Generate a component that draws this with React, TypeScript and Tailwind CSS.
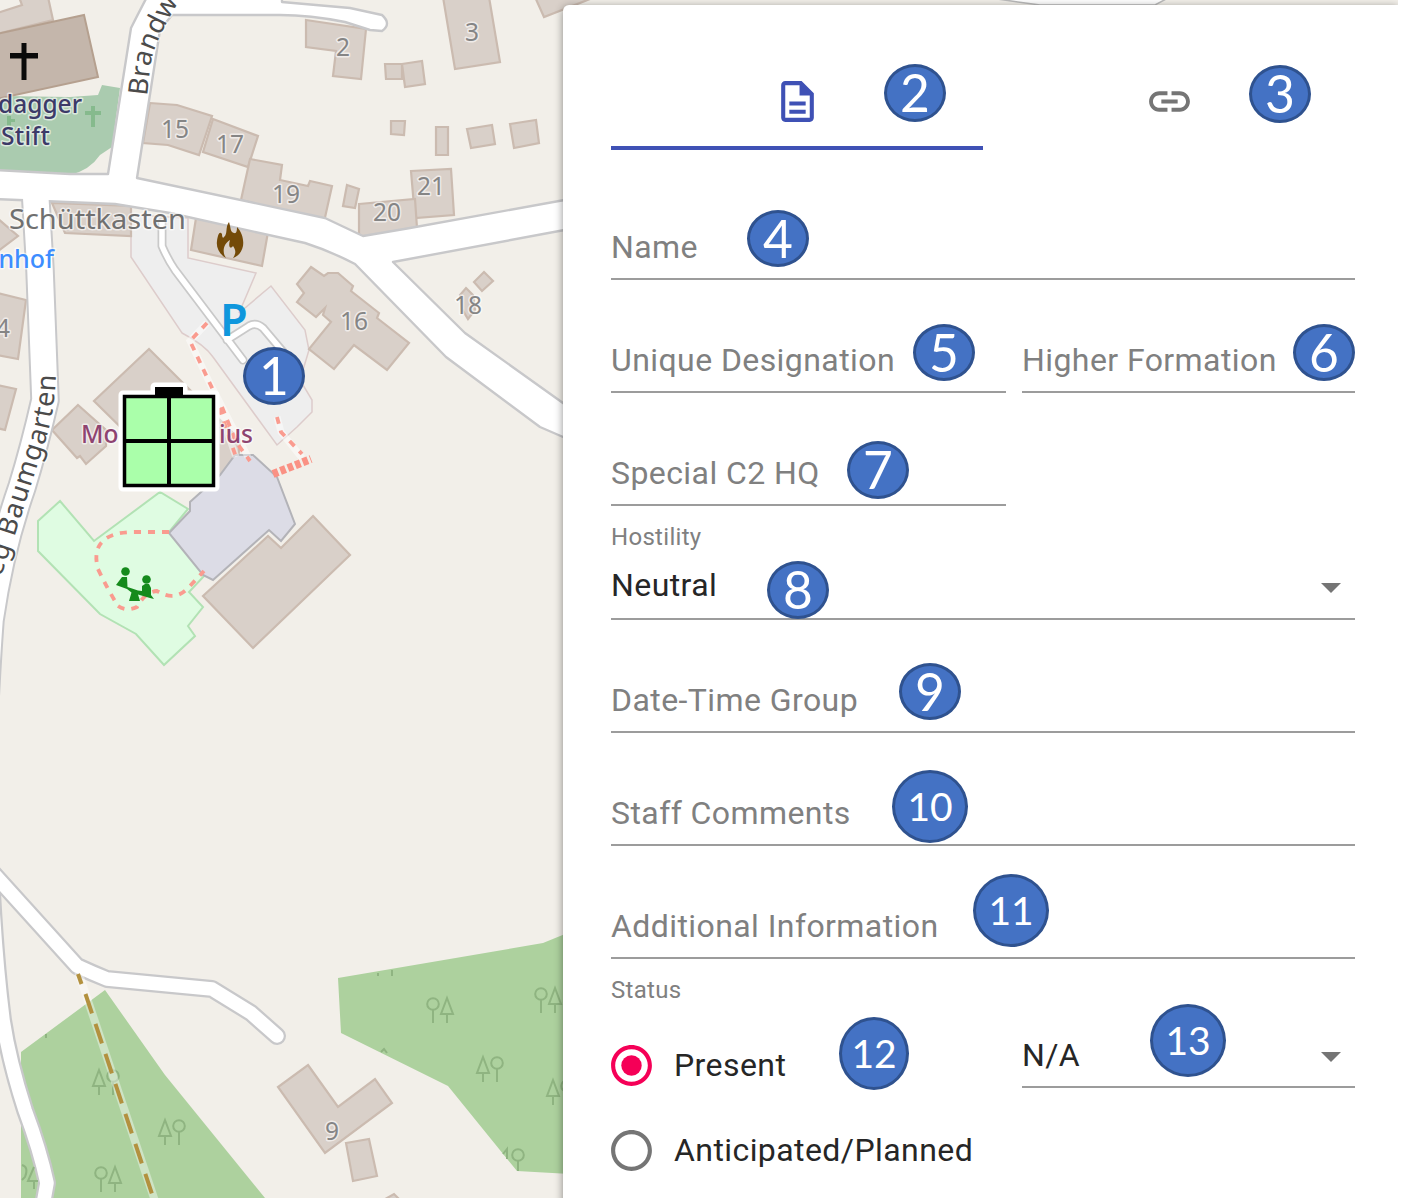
import React from "react";

const BUILDINGS = [
  "-3,13 22,5 19,-3 48,-3 53,20 -3,34",
  "150,103 177,105 212,116 199,155 168,145 143,143",
  "213,119 258,136 248,167 203,152",
  "250,159 282,165 280,180 308,186 310,181 332,186 324,222 241,200",
  "306,20 366,29 361,79 333,76 336,51 306,47",
  "443,-3 489,-3 500,62 455,69",
  "385,64 402,64 402,79 386,79",
  "402,64 422,61 425,84 405,87",
  "391,121 405,121 404,135 391,134",
  "436,127 448,127 448,155 436,155",
  "467,129 492,125 495,144 471,148",
  "510,124 536,120 539,143 514,148",
  "411,171 451,169 454,215 415,218",
  "359,204 415,199 417,228 359,238",
  "347,185 359,189 355,208 343,206",
  "535,-3 544,17 590,-1 590,-3",
  "311,267 324,276 328,273 338,273 353,286 351,291 379,313 377,318 409,343 387,370 354,345 334,369 309,349 331,322 323,315 325,308 316,317 297,302 304,293 297,284",
  "484,272 493,281 482,291 474,282",
  "466,288 473,295 475,310 468,319 462,309 460,295",
  "196,218 268,232 262,266 191,250",
  "52,203 131,206 131,236 65,233",
  "-3,218 18,236 -3,252",
  "-3,293 26,300 18,359 -3,355",
  "-3,385 16,389 5,430 -3,428",
  "149,349 94,401 150,456 215,480 238,460 240,440",
  "78,405 106,430 106,446 86,464 80,456 77,458 52,430",
  "313,516 350,555 253,648 203,596 268,536 281,548",
  "308,1065 338,1107 375,1079 392,1103 325,1153 278,1087",
  "346,1143 369,1139 377,1176 353,1181",
  "380,1202 394,1194 402,1202",
];

const NUMBERS: [string, number, number][] = [
  ["2", 343, 56],
  ["3", 472, 41],
  ["15", 175, 138],
  ["17", 230, 153],
  ["19", 286, 203],
  ["20", 387, 221],
  ["21", 431, 195],
  ["16", 354, 330],
  ["18", 468, 314],
  ["4", 3, 337],
  ["9", 332, 1140],
];

const SOUTH_ROAD = "M35,185 L40,270 L45,400 Q34,448 22,487 Q0,550 -10,620 Q-13,660 -16,720";
const WEST_ROAD = "M-10,850 Q-6,950 3,1020 Q9,1060 25,1110 Q40,1150 47,1183 L43,1205";
const TRACK = "M-8,872 L77,966 Q92,973 107,979 L212,989 L251,1013 L277,1036";
const SERVICE = "M162,222 L162,246 Q168,260 175,270 L243,360 M227,340 L249,326 Q256,322 263,328 L290,360";
const MAIN_ROAD =
  "M-5,170 L70,174 L108,174 L131,28 Q138,14 148,-5 L282,-5 L282,2 L350,8 L382,15 Q392,24 382,31 L370,30 L345,22 Q310,15 280,15 L185,15 L172,15 L160,30 L137,178 L325,218 L363,236 L410,228 L570,199 L570,229 L393,262 L465,333 L570,408 L570,440 L540,427 L446,357 L355,264 Q330,251 305,243 L170,213 L115,204 L-5,199 Z";

function Trees({ x, y, flip = false }: { x: number; y: number; flip?: boolean }) {
  return (
    <g transform={`translate(${x} ${y}) scale(${flip ? -1 : 1} 1)`} fill="none" stroke="#8fb481" strokeWidth="2">
      <circle cx="-7" cy="-6" r="5.8" />
      <path d="M-7,0 V13 M7,-12 L1,4 H13 Z M7,4 V13" />
    </g>
  );
}

function MapCanvas() {
  return (
    <svg className="absolute inset-0" width="1398" height="1198" viewBox="0 0 1398 1198" fontFamily="'Noto Sans', sans-serif">
      <rect width="1398" height="1198" fill="#f2efe9" />
      <path d="M-5,96 L70,97 L98,95 L102,85 L120,88 L112,147 L100,155 Q90,170 70,175 L-5,172Z" fill="#aacbaf" />
      <path d="M105,990 L21,1052 V1198 H265 L165,1075Z" fill="#add19e" />
      <path d="M338,978 L543,943 L570,932 V1174 L517,1171 L448,1086 L341,1033Z" fill="#add19e" />
      <path
        d="M131,215 V257 L182,333 Q205,345 213,357 L277,445 L297,427 L312,412 V400 L300,380 L309,350 L305,330 L271,286 L239,313 L256,273 L188,258 V218Z"
        fill="#eeeeee"
        stroke="#ddcccb"
        strokeWidth="1.5"
      />
      <g fill="#d9d0c9" stroke="#cbbbb0" strokeWidth="2.2">
        {BUILDINGS.map((p) => (
          <polygon key={p} points={p} />
        ))}
      </g>
      <polygon points="-3,34 84,15 98,77 -3,99" fill="#c4b6ab" stroke="#b5a08f" strokeWidth="2" />
      <path
        d="M60,501 L38,521 V551 L100,614 L136,634 L164,665 L195,636 L188,626 L203,607 L189,592 L205,575 L169,532 L188,509 L160,492 L94,541Z"
        fill="#dffce2"
        stroke="#b2e2b4"
        strokeWidth="2"
      />
      <path
        d="M235,455 H253 L277,477 L295,524 L281,541 L269,530 L213,580 L203,575 L169,533 L190,511 V502 L220,475Z"
        fill="#dcdce6"
        stroke="#b3b3b8"
        strokeWidth="2"
      />

      <g fill="none" strokeLinejoin="round" strokeLinecap="round">
        <path d={SERVICE} stroke="#c9c9c9" strokeWidth="9" />
        <path d={SOUTH_ROAD} stroke="#c8c8ca" strokeWidth="29.5" strokeLinecap="butt" />
        <path d={WEST_ROAD} stroke="#c8c8ca" strokeWidth="18" />
        <path d={TRACK} stroke="#c8c8ca" strokeWidth="18" />
      </g>
      <path d={MAIN_ROAD} fill="#fff" stroke="#c8c8ca" strokeWidth="2.4" strokeLinejoin="round" />
      <g fill="none" stroke="#fff" strokeLinejoin="round" strokeLinecap="round">
        <path d={SERVICE} strokeWidth="5.5" />
        <path d={SOUTH_ROAD} strokeWidth="25.5" strokeLinecap="butt" />
        <path d={WEST_ROAD} strokeWidth="13.5" />
        <path d={TRACK} strokeWidth="13.5" />
      </g>
      <path d="M990,-2 L1040,5 L1155,5 L1168,-2Z" fill="#fff" stroke="#bbb" strokeWidth="1.5" />

      <Trees x={440} y={1010} />
      <Trees x={548} y={1000} />
      <Trees x={490} y={1069} flip />
      <Trees x={560} y={1092} flip />
      <g fill="none" stroke="#8fb481" strokeWidth="2">
        <circle cx="518" cy="1155" r="5.8" />
        <path d="M518,1161 V1171 M503,1154 L507,1149 V1159 M378,976 V973 M392,976 V970 M381,1052 L384,1049 L387,1053 M46,1038 V1034" />
      </g>
      <Trees x={106} y={1082} flip />
      <Trees x={172} y={1132} flip />
      <Trees x={108} y={1179} />
      <g fill="none" stroke="#8fb481" strokeWidth="2">
        <path d="M22,1165 Q29,1167 25,1177 L22,1180 M34,1167 L28,1181 H38 M34,1181 V1189" />
      </g>

      <path d="M78,971 L158,1210" stroke="#fff" strokeOpacity=".4" strokeWidth="8" />
      <path d="M78,974 L81.500,984" stroke="#b3913f" strokeWidth="4" />
      <path d="M85.500,994 L158,1212" stroke="#b3913f" strokeWidth="4" strokeDasharray="20.5 11.1" />

      <g fill="none" stroke="#fff" strokeOpacity=".45" strokeWidth="7">
        <path d="M207,323 L190,341 L213,390 L236,457 M212,387 L248,457 M277,417 L281,432 L302,458" />
      </g>
      <g fill="none" stroke="#fa9b8f" strokeWidth="3.8" strokeDasharray="7 7">
        <path d="M207,323 L190,341 L213,390 L236,457" />
        <path d="M222,407 L236,442 L250,461" />
        <path d="M277,417 L281,432 L302,454" />
        <path d="M169,532 H135 Q112,532 103,541 Q93,550 98,569 Q108,590 118,606 Q127,612 137,607 Q145,592 157,591 Q175,602 188,588 L204,571" />
      </g>
      <path d="M273,474 L311,459" stroke="#fa9184" strokeWidth="8" strokeDasharray="5.5 2.5" />

      <g fill="#0a0a0a">
        <rect x="21.5" y="43" width="5" height="37" />
        <rect x="10" y="53" width="28" height="5.5" />
      </g>
      <path d="M91,106 H95 V111 H101 V115 H95 V127 H91 V115 H85 V111 H91Z M7,116 H11 V119 H15 V122 H11 V126 H7Z" fill="#86ba8d" />

      {/* Fire station */}
      <path
        d="M229,222 C231,228 230,232 234,233 C237,234 237,229 237,227 C242,232 244,240 243,246 C242,251 239,256 233,258 C237,252 235,249 233,246 C230,250 228,246 230,240 C223,244 222,253 226,258 C219,254 216,247 217,241 C218,233 220,231 222,234 C222,237 223,239 224,237 C228,234 225,227 229,222Z"
        fill="#734a08"
      />

      {/* Playground */}
      <g fill="#158a1c">
        <circle cx="125.5" cy="571.5" r="4.3" />
        <circle cx="146.5" cy="579.5" r="4.3" />
        <path d="M122,577 H127 L127.5,587 L138,590.5 L142,591 V586 L145,584 H149 L151,588 V595 L154,599 L150,598 L138,594.5 L140,601 H129 L131.5,592.5 L127,589 L116,585Z" />
      </g>

      <g stroke="#fff" strokeOpacity=".6" strokeWidth="3" paintOrder="stroke" strokeLinejoin="round">
        <g fill="#858585" fontSize="24.5" textAnchor="middle">
          {NUMBERS.map(([n, x, y]) => (
            <text key={n} x={x} y={y}>
              {n}
            </text>
          ))}
        </g>
        <text x="9" y="229" fontSize="28" textLength="177" lengthAdjust="spacingAndGlyphs" fill="#707070">
          Schüttkasten
        </text>
        <text x="54" y="268" fontSize="25" textAnchor="end" fontWeight="500" fill="#3d8dff">
          nhof
        </text>
        <text x="82" y="113" fontSize="24.5" textAnchor="end" fontWeight="500" fill="#3c3a68">
          dagger
        </text>
        <text x="1" y="145" fontSize="24.5" textLength="49" fontWeight="500" fill="#3c3a68">
          Stift
        </text>
        <text x="81" y="443" fontSize="24.5" fontWeight="500" fill="#8e4470">
          Mo
        </text>
        <text x="253" y="443" fontSize="24.5" fontWeight="500" textAnchor="end" fill="#8e4470">
          ius
        </text>
        <path id="brandweg" d="M147,96 L151,62 Q156,38 180,0 L200,-40" fill="none" stroke="none" />
        <path id="baumgarten" d="M-13,625 Q-4,590 14,538 L44,445 Q55,412 56,374" fill="none" stroke="none" />
        <g fontSize="27" fill="#4b4b4b">
          <text letterSpacing="0.6">
            <textPath href="#brandweg">Brandweg</textPath>
          </text>
          <text textAnchor="end" letterSpacing="1">
            <textPath href="#baumgarten" startOffset="100%">
              Weg Baumgarten
            </textPath>
          </text>
        </g>
      </g>
      <text x="220" y="336" fontSize="45" fontWeight="600" fill="#0f97dd">
        P
      </text>

      {/* Selected neutral unit */}
      <path d="M123,395 H155 V387 H183 V395 H215 V487 H123Z" stroke="#fff" strokeWidth="9" strokeLinejoin="round" fill="#fff" />
      <rect x="124.500" y="396.500" width="89" height="89" fill="#aaffaa" stroke="#000" strokeWidth="3.5" />
      <path d="M169,397 V485 M125,441 H213" stroke="#000" strokeWidth="4" />
      <rect x="155" y="387" width="28" height="9" />
    </svg>
  );
}

const smallBadge =
  "absolute flex items-center justify-center rounded-[50%] border-[3px] border-[#2f528f] bg-[#4472c4] font-['Lato',sans-serif] text-white leading-none text-[51.5px] h-[58px] w-[62px]";
const largeBadge =
  "absolute flex items-center justify-center rounded-[50%] border-[3px] border-[#2f528f] bg-[#4472c4] font-['Lato',sans-serif] text-white leading-none text-[39px] h-[73px] w-[76px]";

const BADGES = [
  "left-[243px] top-[347px]",
  "left-[884px] top-[64px]",
  "left-[1249px] top-[65px]",
  "left-[747px] top-[210px] !h-[57px]",
  "left-[913px] top-[324px] !h-[57px]",
  "left-[1293px] top-[324px] !h-[57px]",
  "left-[847px] top-[441px]",
  "left-[767px] top-[561px]",
  "left-[899px] top-[663px] !h-[57px]",
  "left-[892px] top-[770px]",
  "left-[973px] top-[874px]",
  "left-[839px] top-[1017px] !w-[70px]",
  "left-[1150px] top-[1004px]",
];

function Field({ label }: { label: string }) {
  return (
    <div className="flex h-[113.2px] items-end border-b-2 border-[#9c9c9c] pb-[15px]">
      <span className="whitespace-nowrap leading-[32px] text-[#808080]">{label}</span>
    </div>
  );
}

function Arrow() {
  return (
    <svg className="size-[48px]" viewBox="0 0 24 24" fill="#757575">
      <path d="M7 10l5 5 5-5z" />
    </svg>
  );
}

function Radio({ label, checked = false }: { label: string; checked?: boolean }) {
  return (
    <div className="flex h-[85px] items-center">
      <svg className="-ml-1 mr-[18px] size-[49px]" viewBox="0 0 24 24" fill={checked ? "#f50057" : "#757575"}>
        <path d="M12 2C6.48 2 2 6.48 2 12s4.48 10 10 10 10-4.48 10-10S17.52 2 12 2zm0 18c-4.42 0-8-3.58-8-8s3.58-8 8-8 8 3.58 8 8-3.58 8-8 8z" />
        {checked && <circle cx="12" cy="12" r="5" />}
      </svg>
      <span className="whitespace-nowrap leading-[32px]">{label}</span>
    </div>
  );
}

function DetailsPanel() {
  return (
    <section className="relative ml-[563px] mt-[5px] h-[1200px] rounded-tl-[6px] bg-white pl-12 pr-[43px] pt-12 font-['Roboto',sans-serif] text-[32px] tracking-[0.42px] text-[#262626] shadow-[0_2px_8px_rgba(0,0,0,0.45)]">
      <div className="grid h-[97px] grid-cols-2">
        <button className="flex items-center justify-center border-b-4 border-[#3f51b5] pt-1">
          <svg className="size-[49px]" viewBox="0 0 24 24" fill="#3f51b5">
            <path d="M8 16h8v2H8zm0-4h8v2H8zm6-10H6c-1.1 0-2 .9-2 2v16c0 1.1.89 2 1.99 2H18c1.1 0 2-.9 2-2V8l-6-6zm4 18H6V4h7v5h5v11z" />
          </svg>
        </button>
        <button className="flex items-center justify-center">
          <svg className="size-[49px]" viewBox="0 0 24 24" fill="#757575">
            <path d="M3.9 12c0-1.71 1.39-3.1 3.1-3.1h4V7H7c-2.76 0-5 2.24-5 5s2.24 5 5 5h4v-1.9H7c-1.71 0-3.1-1.39-3.1-3.1zM8 13h8v-2H8v2zm9-6h-4v1.9h4c1.71 0 3.1 1.39 3.1 3.1s-1.39 3.1-3.1 3.1h-4V17h4c2.76 0 5-2.24 5-5s-2.24-5-5-5z" />
          </svg>
        </button>
      </div>
      <form className="mt-[16.8px]">
        <Field label="Name" />
        <div className="grid grid-cols-[395px_333px] gap-x-4">
          <Field label="Unique Designation" />
          <Field label="Higher Formation" />
          <Field label="Special C2 HQ" />
        </div>
        <div className="flex h-[113.2px] flex-col border-b-2 border-[#9c9c9c] pt-[18.5px]">
          <span className="text-[24px] leading-[24px] tracking-[0.3px] text-[#808080]">Hostility</span>
          <div className="mt-[12px] flex h-[48px] items-start justify-between">
            <span className="pt-[8px] leading-[32px]">Neutral</span>
            <div className="pt-[2px]">
              <Arrow />
            </div>
          </div>
        </div>
        <Field label="Date-Time Group" />
        <Field label="Staff Comments" />
        <Field label="Additional Information" />
        <div className="grid grid-cols-[395px_333px] gap-x-4 pt-[19px]">
          <div>
            <div className="mb-[20.5px] text-[24px] leading-[24px] tracking-[0.3px] text-[#808080]">Status</div>
            <Radio label="Present" checked />
            <Radio label="Anticipated/Planned" />
          </div>
          <div className="mt-[53px] flex h-[57px] items-start justify-between border-b-2 border-[#9c9c9c]">
            <span className="pt-[8px] leading-[32px]">N/A</span>
            <div className="pt-px">
              <Arrow />
            </div>
          </div>
        </div>
      </form>
    </section>
  );
}

export default function App() {
  return (
    <div className="h-[1198px] w-[1414px] overflow-hidden bg-white">
      <main className="relative flow-root h-[1198px] w-[1398px] overflow-hidden">
        <MapCanvas />
        <DetailsPanel />
        {BADGES.map((place, i) => (
          <div key={place} className={`${i < 9 ? smallBadge : largeBadge} ${place}`}>
            {i + 1}
          </div>
        ))}
      </main>
    </div>
  );
}
